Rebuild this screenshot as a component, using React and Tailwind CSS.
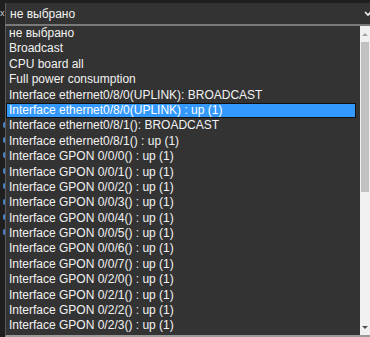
import React from 'react'

const options = [
  'не выбрано',
  'Broadcast',
  'CPU board all',
  'Full power consumption',
  'Interface ethernet0/8/0(UPLINK): BROADCAST',
  'Interface ethernet0/8/0(UPLINK) : up (1)',
  'Interface ethernet0/8/1(): BROADCAST',
  'Interface ethernet0/8/1() : up (1)',
  'Interface GPON 0/0/0() : up (1)',
  'Interface GPON 0/0/1() : up (1)',
  'Interface GPON 0/0/2() : up (1)',
  'Interface GPON 0/0/3() : up (1)',
  'Interface GPON 0/0/4() : up (1)',
  'Interface GPON 0/0/5() : up (1)',
  'Interface GPON 0/0/6() : up (1)',
  'Interface GPON 0/0/7() : up (1)',
  'Interface GPON 0/2/0() : up (1)',
  'Interface GPON 0/2/1() : up (1)',
  'Interface GPON 0/2/2() : up (1)',
  'Interface GPON 0/2/3() : up (1)',
]

const selected = 5

export default function App() {
  return (
    <div
      className="w-[370px] h-[337px] bg-[#1f1f1f] flex overflow-hidden text-[12px] text-[#f2f2f2]"
      style={{ fontFamily: '"Liberation Sans", Arial, sans-serif' }}
    >
      {/* page behind the dropdown, mostly hidden */}
      <div className="w-[5px] shrink-0 overflow-hidden flex flex-col items-start pt-[7px]">
        <span className="leading-[12px] text-[9px] text-[#cfcfcf]">x</span>
        <div className="h-[98px]" />
        {[0, 1, 2, 3, 4, 5, 6, 7].map((i) => (
          <div key={i} className="h-[15.4px] flex items-center justify-end w-full">
            <div className="w-[2px] h-[6px] rounded-l-[2px] bg-[#4a85c8]" />
          </div>
        ))}
      </div>

      <div className="flex-1 flex flex-col pt-[3px]">
        {/* select box */}
        <div className="h-[21px] bg-[#333333] flex items-center pl-[4px] pr-[2px] border-l border-[#5a5a5a]">
          <span className="flex-1">не выбрано</span>
          <svg width="8" height="6" viewBox="0 0 8 6" className="-mr-[4px]">
            <path d="M1 1 L4 4 L7 1" stroke="#f0f0f0" strokeWidth="1.6" fill="none" />
          </svg>
        </div>
        <div className="h-[2px] bg-[#7a7a7a]" />

        {/* option list */}
        <div className="flex-1 flex border-l border-[#5a5a5a] border-b-2 border-b-[#9a9a9a] bg-[#333333]">
          <div className="flex-1 flex flex-col">
            {options.map((opt, i) => (
              <div
                key={i}
                className={
                  i === selected
                    ? 'h-[15.4px] leading-[13px] px-[3px] flex items-center'
                    : 'h-[15.4px] leading-[15.4px] px-[3px] whitespace-nowrap'
                }
              >
                {i === selected ? (
                  <div className="w-full h-[13px] bg-[#3399ff] outline outline-1 outline-[#111] -ml-[2px] pl-[2px] whitespace-nowrap text-white">
                    {opt}
                  </div>
                ) : (
                  opt
                )}
              </div>
            ))}
          </div>

          {/* scrollbar */}
          <div className="w-[10px] bg-[#f0f0f0] flex flex-col items-center">
            <svg width="10" height="16" viewBox="0 0 10 16">
              <path d="M2 10 L5 7 L8 10 Z" fill="#a3a3a3" />
            </svg>
            <div className="w-[8px] h-[150px] bg-[#c1c1c1]" />
            <div className="flex-1" />
            <svg width="10" height="14" viewBox="0 0 10 14">
              <path d="M2 5 L5 8 L8 5 Z" fill="#505050" />
            </svg>
          </div>
        </div>
      </div>
    </div>
  )
}
